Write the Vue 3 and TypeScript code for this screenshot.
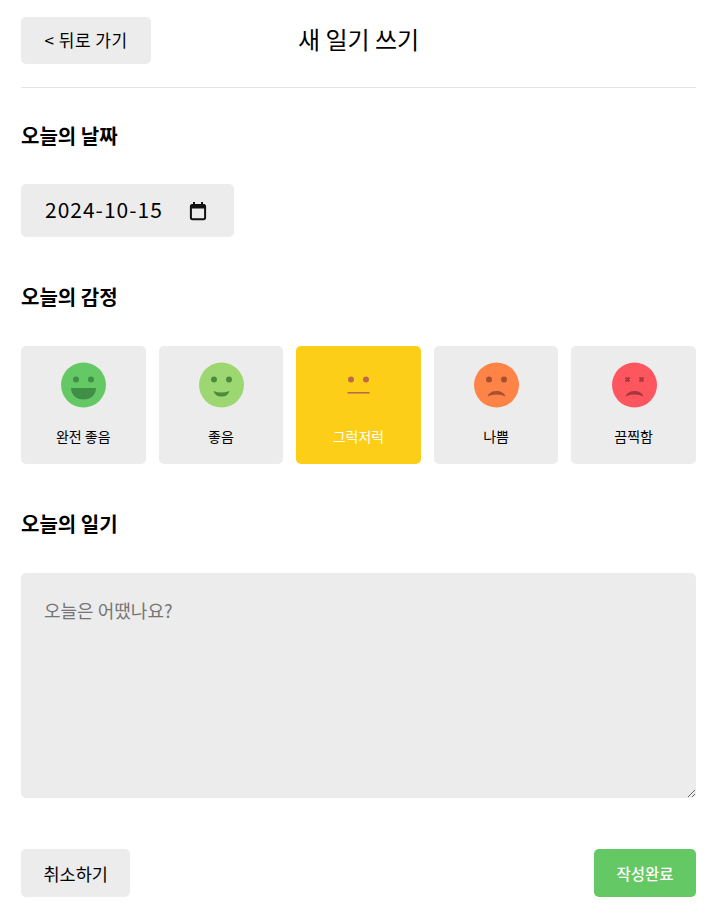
<script setup lang="ts">
import { ref } from 'vue'

const emotions = [
  { id: 1, name: '완전 좋음', color: '#64c964', dark: '#3f8f47', face: 'great' },
  { id: 2, name: '좋음', color: '#9dd772', dark: '#4e8a3c', face: 'good' },
  { id: 3, name: '그럭저럭', color: '#fdce17', dark: '#bc6a4a', face: 'soso' },
  { id: 4, name: '나쁨', color: '#fd8446', dark: '#a84f33', face: 'bad' },
  { id: 5, name: '끔찍함', color: '#fd565f', dark: '#a8373c', face: 'awful' },
]

const selected = ref(3)
const content = ref('')
</script>

<template>
  <div class="page">
    <!-- 상단 헤더 -->
    <header class="header">
      <div class="header-side">
        <button class="btn back">&lt; 뒤로 가기</button>
      </div>
      <h1 class="header-title">새 일기 쓰기</h1>
      <div class="header-side"></div>
    </header>

    <section class="date-section">
      <h4>오늘의 날짜</h4>
      <div class="date-input">
        <span>2024-10-15</span>
        <svg width="20" height="20" viewBox="0 0 20 20" aria-hidden="true">
          <rect x="2.9" y="4" width="14.2" height="14.2" rx="1.6" fill="none" stroke="#111" stroke-width="2" />
          <rect x="2.9" y="3.5" width="14.2" height="4" fill="#111" />
          <rect x="5" y="1" width="2" height="3" fill="#111" />
          <rect x="13" y="1" width="2" height="3" fill="#111" />
        </svg>
      </div>
    </section>

    <section class="emotion-section">
      <h4>오늘의 감정</h4>
      <div class="emotion-list">
        <div
          v-for="item in emotions"
          :key="item.id"
          class="emotion-item"
          :class="{ active: item.id === selected }"
          @click="selected = item.id"
        >
          <svg width="46" height="46" viewBox="-0.5 0 46 46" aria-hidden="true">
            <circle v-if="item.face !== 'soso'" cx="23" cy="23" r="22.5" :fill="item.color" />
            <template v-if="item.face !== 'awful'">
              <circle cx="15.5" cy="17.5" r="3" :fill="item.dark" />
              <circle cx="30.5" cy="17.5" r="3" :fill="item.dark" />
            </template>
            <template v-else>
              <path d="M14 15.500l4 4M18 15.500l-4 4M28 15.500l4 4M32 15.500l-4 4" :stroke="item.dark" stroke-width="2" fill="none" />
            </template>
            <path v-if="item.face === 'great'" d="M10.500 26h25c0 7-5.500 11.500-12.500 11.500S10.500 33 10.500 26z" :fill="item.dark" />
            <path v-if="item.face === 'good'" d="M15 29q8 3 16 0q-1.500 5.500-8 5.500t-8-5.500z" :fill="item.dark" />
            <rect v-if="item.face === 'soso'" x="12" y="30" width="22" height="1.600" :fill="item.dark" />
            <path v-if="item.face === 'bad' || item.face === 'awful'" d="M14 34.500q2-5.500 9-5.500t9 5.500q-4-2-9-2t-9 2z" :fill="item.dark" />
          </svg>
          <span class="emotion-name">{{ item.name }}</span>
        </div>
      </div>
    </section>

    <section class="content-section">
      <h4>오늘의 일기</h4>
      <textarea v-model="content" placeholder="오늘은 어땠나요?"></textarea>
    </section>

    <footer class="actions">
      <button class="btn cancel">취소하기</button>
      <button class="btn submit">작성완료</button>
    </footer>
  </div>
</template>

<style scoped>
.page {
  padding: 17px 20px 26px 21px;
  font-family: "Noto Sans CJK KR", "Noto Sans", sans-serif;
  color: #000;
}

.header {
  display: flex;
  align-items: center;
  padding-bottom: 23px;
  border-bottom: 1px solid #e2e2e2;
}
.header-side { width: 25%; flex: none; }
.header-title {
  flex: 1;
  margin: 0;
  padding-bottom: 4px;
  font-size: 24px;
  font-weight: 400;
  text-align: center;
  white-space: nowrap;
}

.btn {
  height: 47px;
  padding: 0 23px;
  border: none;
  border-radius: 5px;
  background: #ececec;
  color: #000;
  font: inherit;
  font-size: 16px;
  white-space: nowrap;
}
.btn.back { padding: 0 23.500px 2px; font-size: 17px; letter-spacing: 0.5px; }

h4 {
  margin: 0;
  height: 26px;
  font-size: 20px;
  line-height: 26px;
  font-weight: 700;
}

.date-section { margin-top: 35px; }
.date-input {
  display: inline-flex;
  align-items: center;
  gap: 25px;
  box-sizing: border-box;
  margin-top: 35px;
  height: 53px;
  padding: 0 26px 3px 24px;
  border-radius: 5px;
  background: #ececec;
  font-size: 21px;
  letter-spacing: 1px;
}
.date-input svg { display: block; margin-top: 3px; }

.emotion-section { margin-top: 47px; }
.emotion-list {
  display: grid;
  grid-template-columns: repeat(5, 1fr);
  gap: 13px;
  margin-top: 36px;
}
.emotion-item {
  display: flex;
  flex-direction: column;
  align-items: center;
  height: 118px;
  padding-top: 16px;
  box-sizing: border-box;
  border-radius: 5px;
  background: #ececec;
  cursor: pointer;
}
.emotion-item.active { background: #fdce17; color: #fff; }
.emotion-name { margin-top: 17px; font-size: 14px; line-height: 22px; }

.content-section { margin-top: 47px; }
textarea {
  display: block;
  box-sizing: border-box;
  width: 100%;
  height: 225px;
  margin-top: 36px;
  padding: 23px;
  border: none;
  border-radius: 5px;
  outline: none;
  background: #ececec;
  font: inherit;
  font-size: 18px;
  line-height: 28px;
}
textarea::placeholder { color: #757575; }

.actions {
  display: flex;
  justify-content: space-between;
  margin-top: 51px;
}
.btn.cancel { height: 48px; padding: 0 22.500px; font-size: 17.500px; }
.btn.submit { height: 48px; padding: 0 22.500px; font-size: 15.500px; font-weight: 500; background: #64c964; color: #fff; }
</style>

<style>
html, body { background: #fff; }
</style>
